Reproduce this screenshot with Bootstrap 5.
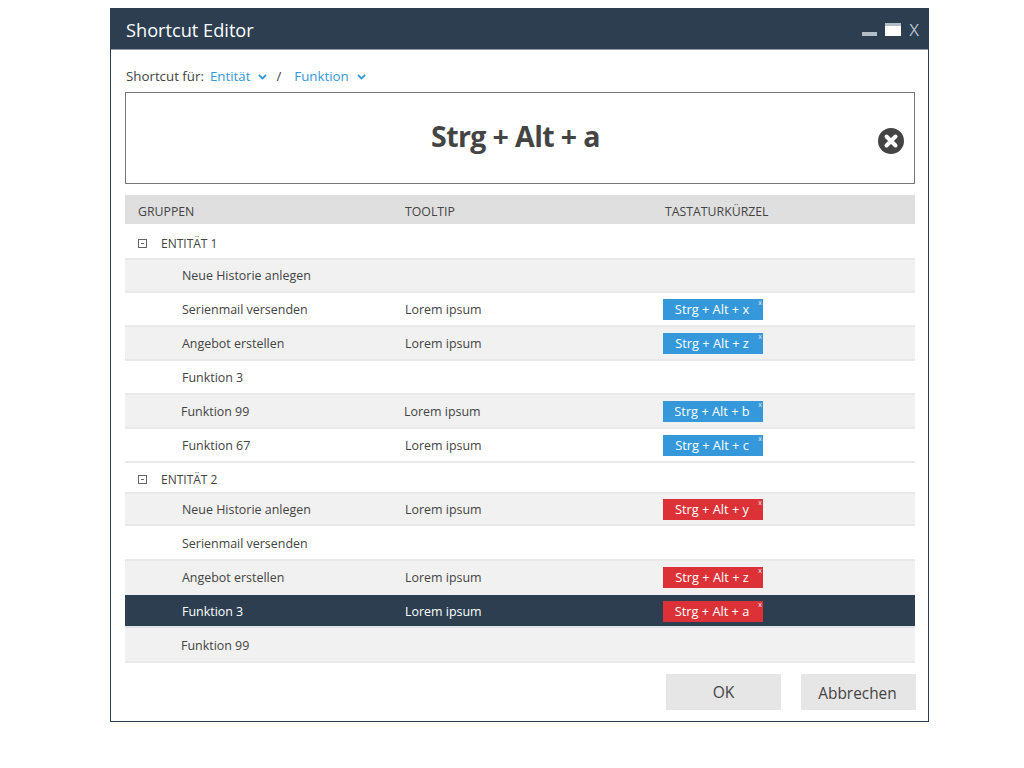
<!DOCTYPE html>
<html lang="de">
<head>
<meta charset="utf-8">
<title>Shortcut Editor</title>
<link href="https://cdn.jsdelivr.net/npm/bootstrap@5.3.0/dist/css/bootstrap.min.css" rel="stylesheet">
<style>
body{background:#fff;font-family:"Open Sans","Liberation Sans",sans-serif;color:#444;margin:0;padding:8px 95px 0 110px;}
.win{width:819px;height:714px;border:1px solid #2c3e50;background:#fff;}
.win-title{height:41px;background:#2c3e50;border-bottom:1px solid #8a96a3;color:#fff;padding:0 9px 0 15px;}
.win-title h1{font-size:18.2px;font-weight:400;margin:3px 0 0;}
.win-ctrl{color:#b4bdc6;font-size:17px;line-height:1;}
.ctl-min{width:15px;height:4px;background:#b4bdc6;margin:10px 8px 0 0;}
.ctl-max{width:16px;height:13px;background:#fff;border-top:3px solid #b4bdc6;margin-right:8px;}
.win-body{padding:0 13px 0 14px;}
.crumb{height:42px;font-size:13.3px;padding:12px 0 0 1px;}
.crumb .lbl{margin-right:6px;}
.crumb .lnk{color:#3498db;}
.crumb svg{margin-left:8px;}
.crumb .sep{margin:0 13px 0 9px;}
.keybox{height:92px;border:1px solid #777;margin-bottom:11px;}
.keybox .combo{font-size:28.5px;font-weight:700;color:#444;letter-spacing:-.6px;margin:-4px 0 0 -9px;}
.keybox .clear{position:absolute;right:10px;top:35px;width:26px;height:26px;}
.grid-row{display:grid;grid-template-columns:267px 260px 1fr;align-items:center;font-size:12.45px;color:#444;border-bottom:2px solid #e9e9e9;padding-left:13px;}
.grid-row>div{min-width:0;}
.hd{background:#dfdfdf;height:29px;border-bottom:0;font-size:12.3px;padding-top:5px;}
.ent{height:36px;font-size:12px;}
.ent>div:first-child{padding-top:6px;}
.ent2{height:31px;}
.ent2>div:first-child{padding-top:4px;}
.tog{display:inline-block;width:9px;height:9px;border:1px solid #666;margin:0 14px 0 0;position:relative;}
.tog::after{content:"";position:absolute;left:2px;right:2px;top:3px;height:1px;background:#666;}
.itm{height:34px;}
.itm>div{padding-top:2px;}
.itm>div:last-child{padding-top:0;display:flex;align-items:center;}
.itm>div:first-child{padding-left:44px;}
.itm.low>div:not(:last-child){padding-top:4px;}
.itm.odd{background:#f1f1f1;}
.itm.h33{height:33px;}
.itm.h32{height:32px;}
.itm.h35{height:35px;}
.itm.no-div{border-bottom:0;}
.itm.no-div>div{padding-top:0;}
.itm.no-div>div:last-child{padding-bottom:2px;}
.itm.sel{background:#2c3e50;color:#fff;border-bottom-color:#e0e3e6;height:33px;}
.itm.sel>div:last-child{padding-top:1px;}
.itm.nudge{padding-left:12px;}
.itm.nudge .kc{margin-left:-1px;}
.kc{display:inline-flex;position:relative;width:100px;height:21px;align-items:center;justify-content:center;padding:2px 2px 0 0;color:#fff;font-size:12.8px;margin-left:-2px;}
.kc.blue{background:#3498db;}
.kc.red{background:#dc3237;}
.kc i{position:absolute;right:1px;top:-1px;font-size:7px;line-height:10px;font-style:normal;color:#dfeaf3;}
.foot{gap:20px;margin:11px -1px 0 0;}
.foot .btn{background:#e6e6e6;border:0;border-radius:0;color:#444;height:36px;font-size:15.6px;padding:2px 0 0;width:115px;}
.foot .b-ab{padding:4px 2px 0 0;font-size:15.4px;}
</style>
</head>
<body>
<div class="win d-flex flex-column">
  <div class="win-title d-flex align-items-center justify-content-between">
    <h1>Shortcut Editor</h1>
    <div class="win-ctrl d-flex align-items-center">
      <span class="ctl-min"></span><span class="ctl-max"></span><span>X</span>
    </div>
  </div>
  <div class="win-body">
    <div class="crumb d-flex align-items-center">
      <span class="lbl">Shortcut für:</span>
      <span class="lnk">Entität</span>
      <svg width="9" height="6" viewBox="0 0 9 6"><path d="M1 1l3.5 3.5L8 1" fill="none" stroke="#3498db" stroke-width="1.8"/></svg>
      <span class="sep">/</span>
      <span class="lnk">Funktion</span>
      <svg width="9" height="6" viewBox="0 0 9 6"><path d="M1 1l3.5 3.5L8 1" fill="none" stroke="#3498db" stroke-width="1.8"/></svg>
    </div>
    <div class="keybox position-relative d-flex align-items-center justify-content-center">
      <span class="combo">Strg + Alt + a</span>
      <svg class="clear" viewBox="0 0 26 26"><circle cx="13" cy="13" r="13" fill="#444"/><path d="M8.5 8.5l9 9M17.500 8.500l-9 9" stroke="#fff" stroke-width="4" stroke-linecap="round"/></svg>
    </div>
    <div class="grid-row hd"><div>GRUPPEN</div><div>TOOLTIP</div><div>TASTATURKÜRZEL</div></div>
    <div class="grid-row ent"><div><span class="tog"></span>ENTITÄT 1</div><div></div><div></div></div>
    <div class="grid-row itm odd h33"><div>Neue Historie anlegen</div><div></div><div></div></div>
    <div class="grid-row itm"><div>Serienmail versenden</div><div>Lorem ipsum</div><div><span class="kc blue">Strg + Alt + x<i>x</i></span></div></div>
    <div class="grid-row itm odd"><div>Angebot erstellen</div><div>Lorem ipsum</div><div><span class="kc blue">Strg + Alt + z<i>x</i></span></div></div>
    <div class="grid-row itm"><div>Funktion 3</div><div></div><div></div></div>
    <div class="grid-row itm odd nudge"><div>Funktion 99</div><div>Lorem ipsum</div><div><span class="kc blue">Strg + Alt + b<i>x</i></span></div></div>
    <div class="grid-row itm"><div>Funktion 67</div><div>Lorem ipsum</div><div><span class="kc blue">Strg + Alt + c<i>x</i></span></div></div>
    <div class="grid-row ent ent2"><div><span class="tog"></span>ENTITÄT 2</div><div></div><div></div></div>
    <div class="grid-row itm odd h32"><div>Neue Historie anlegen</div><div>Lorem ipsum</div><div><span class="kc red">Strg + Alt + y<i>x</i></span></div></div>
    <div class="grid-row itm h35 low"><div>Serienmail versenden</div><div></div><div></div></div>
    <div class="grid-row itm odd no-div"><div>Angebot erstellen</div><div>Lorem ipsum</div><div><span class="kc red">Strg + Alt + z<i>x</i></span></div></div>
    <div class="grid-row itm sel low"><div>Funktion 3</div><div>Lorem ipsum</div><div><span class="kc red">Strg + Alt + a<i>x</i></span></div></div>
    <div class="grid-row itm odd h35 nudge low"><div>Funktion 99</div><div></div><div></div></div>
    <div class="foot d-flex justify-content-end">
      <button type="button" class="btn">OK</button>
      <button type="button" class="btn b-ab">Abbrechen</button>
    </div>
  </div>
</div>
<script src="https://cdn.jsdelivr.net/npm/bootstrap@5.3.0/dist/js/bootstrap.bundle.min.js"></script>
</body>
</html>
